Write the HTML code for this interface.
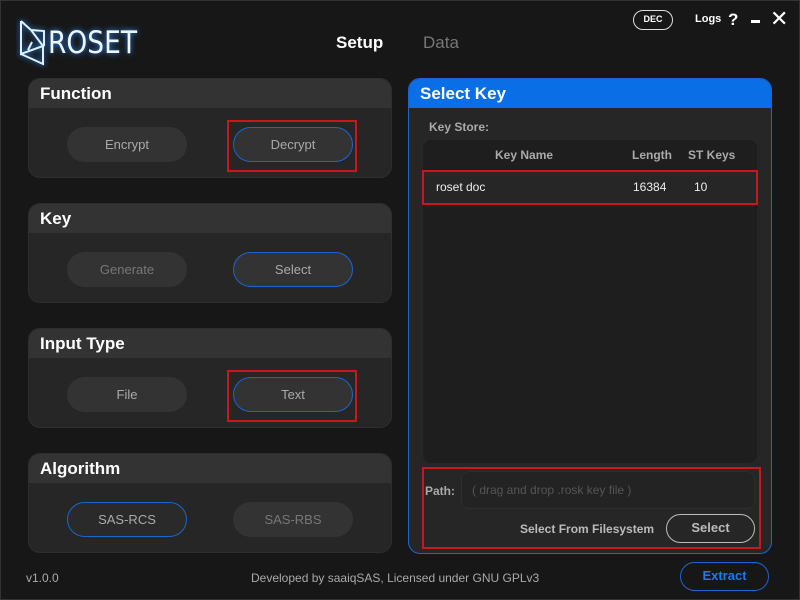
<!DOCTYPE html><html><head><style>
*{box-sizing:border-box;margin:0;padding:0}
body{width:800px;height:600px;background:#171717;font-family:"Liberation Sans",sans-serif;position:relative;overflow:hidden;color:#ccc}
.a{position:absolute}
.card{position:absolute;left:28px;width:364px;height:100px;background:#262626;border-radius:12px;overflow:hidden;border:1px solid #2e2e2e}
.card .h{height:29px;background:#333;color:#fff;font-weight:bold;font-size:17px;padding:5px 11px}
.btn{position:absolute;width:120px;height:35px;border-radius:18px;background:#333;color:#aaa;font-size:13px;display:flex;align-items:center;justify-content:center}
.bl{border:1.5px solid #1a66d0}
.red{position:absolute;border:2px solid #c8181c}
</style></head><body>
<div class="a" style="left:0;top:0;width:800px;height:600px;border:1px solid #333"></div>
<svg class="a" style="left:16px;top:16px" width="140" height="54"><g fill="none" stroke="#dff0ff" stroke-width="2" style="filter:drop-shadow(0 0 3px #2a8cff)"><path d="M5 5 L5 38 L27 30 L15 14 L5 5 M5 38 L27 48 L27 30 M15 14 L28 15 L28 30 M16 26 L12 34"/></g><text x="32" y="37" fill="#eef6ff" font-size="31" font-family="DejaVu Sans" font-weight="normal" textLength="89" lengthAdjust="spacingAndGlyphs" style="filter:drop-shadow(0 0 3px #2a8cff)">ROSET</text></svg>
<div class="a" style="left:336px;top:33px;font-size:17px;font-weight:bold;color:#fff">Setup</div>
<div class="a" style="left:423px;top:33px;font-size:17px;color:#777">Data</div>
<div class="a" style="left:633px;top:10px;width:40px;height:20px;border:1.5px solid #ddd;border-radius:10px;color:#fff;font-size:9px;font-weight:bold;text-align:center;line-height:17px">DEC</div>
<div class="a" style="left:695px;top:13px;font-size:11px;font-weight:bold;color:#fff">Logs</div>
<div class="a" style="left:728px;top:10px;font-size:17px;font-weight:bold;color:#fff">?</div>
<div class="a" style="left:751px;top:20px;width:9px;height:3px;background:#fff"></div>
<div class="a" style="left:770px;top:6px;font-size:22px;color:#fff">✕</div>
<div class="card" style="top:78px"><div class="h">Function</div></div>
<div class="card" style="top:203px"><div class="h">Key</div></div>
<div class="card" style="top:328px"><div class="h">Input Type</div></div>
<div class="card" style="top:453px"><div class="h">Algorithm</div></div>
<div class="btn" style="left:67px;top:127px">Encrypt</div>
<div class="btn bl" style="left:233px;top:127px">Decrypt</div>
<div class="red" style="left:227px;top:120px;width:130px;height:52px"></div>
<div class="btn" style="left:67px;top:252px;color:#777">Generate</div>
<div class="btn bl" style="left:233px;top:252px">Select</div>
<div class="btn" style="left:67px;top:377px">File</div>
<div class="btn bl" style="left:233px;top:377px">Text</div>
<div class="red" style="left:227px;top:370px;width:130px;height:52px"></div>
<div class="btn bl" style="left:67px;top:502px;background:#2a2a2a">SAS-RCS</div>
<div class="btn" style="left:233px;top:502px;color:#777">SAS-RBS</div>
<div class="a" style="left:408px;top:78px;width:364px;height:476px;background:#262626;border:1.5px solid #1a66d0;border-radius:12px;overflow:hidden"><div style="height:29px;background:#0a6ee6;color:#fff;font-weight:bold;font-size:17px;padding:5px 11px">Select Key</div></div>
<div class="a" style="left:429px;top:120px;font-size:12px;font-weight:bold;color:#aaa">Key Store:</div>
<div class="a" style="left:423px;top:140px;width:334px;height:323px;background:#1e1e1e;border-radius:8px"></div>
<div class="a" style="left:495px;top:148px;font-size:12px;font-weight:bold;color:#aaa">Key Name</div>
<div class="a" style="left:632px;top:148px;font-size:12px;font-weight:bold;color:#aaa">Length</div>
<div class="a" style="left:688px;top:148px;font-size:12px;font-weight:bold;color:#aaa">ST Keys</div>
<div class="a" style="left:423px;top:172px;width:334px;height:31px;background:#262626"></div>
<div class="red" style="left:422px;top:170px;width:336px;height:35px"></div>
<div class="a" style="left:436px;top:180px;font-size:12px;color:#eee">roset doc</div>
<div class="a" style="left:633px;top:180px;font-size:12px;color:#eee">16384</div>
<div class="a" style="left:694px;top:180px;font-size:12px;color:#eee">10</div>
<div class="a" style="left:425px;top:484px;font-size:12px;font-weight:bold;color:#aaa">Path:</div>
<div class="a" style="left:461px;top:471px;width:294px;height:38px;border:1.5px solid #2e2e2e;border-radius:8px;background:#232323;color:#555;font-size:12px;padding:11px 10px">( drag and drop .rosk key file )</div>
<div class="a" style="left:520px;top:522px;font-size:12px;font-weight:bold;color:#bbb">Select From Filesystem</div>
<div class="a" style="left:666px;top:514px;width:89px;height:29px;border:1.5px solid #bbb;border-radius:15px;color:#bbb;font-size:13px;font-weight:bold;text-align:center;line-height:26px">Select</div>
<div class="red" style="left:422px;top:467px;width:339px;height:82px"></div>
<div class="a" style="left:26px;top:571px;font-size:12px;color:#aaa">v1.0.0</div>
<div class="a" style="left:251px;top:571px;font-size:12px;color:#aaa">Developed by saaiqSAS, Licensed under GNU GPLv3</div>
<div class="a" style="left:680px;top:562px;width:89px;height:29px;border:1.5px solid #1a66d0;border-radius:15px;color:#1a78f0;font-size:13px;font-weight:bold;text-align:center;line-height:26px">Extract</div>
</body></html>
